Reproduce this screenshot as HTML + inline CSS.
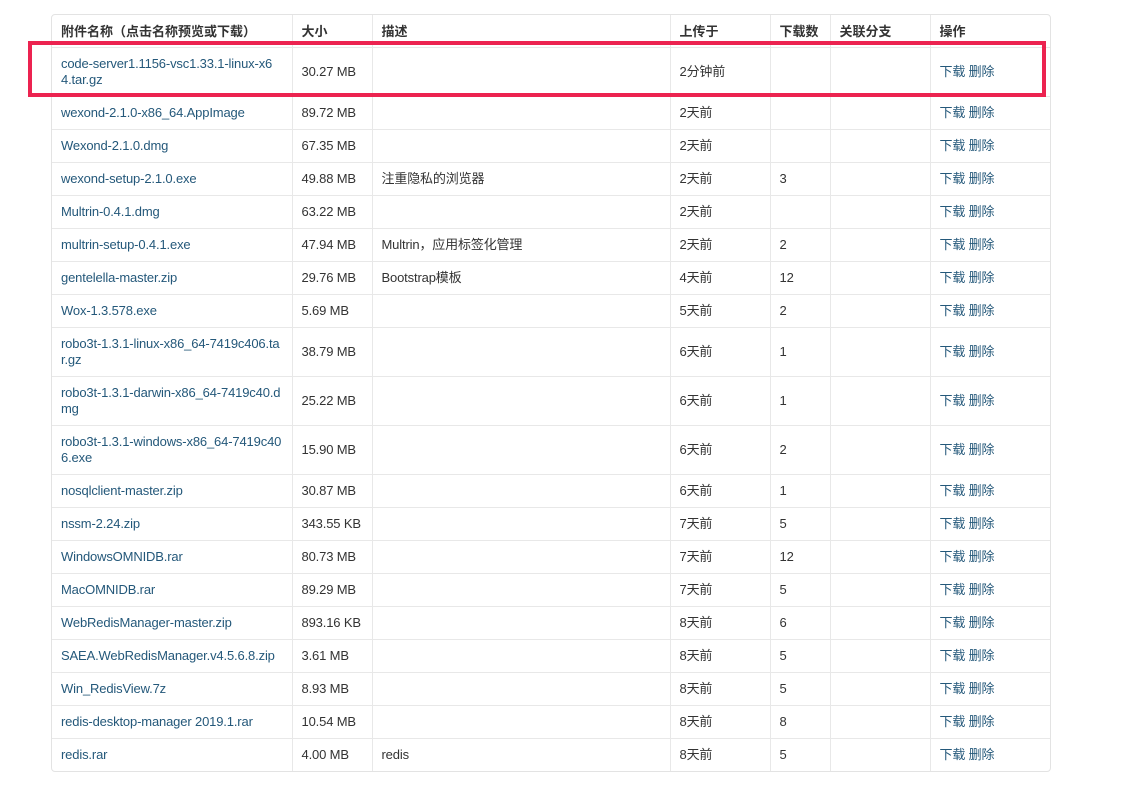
<!DOCTYPE html>
<html><head><meta charset="utf-8"><style>
body{margin:0;background:#fff;font-family:"Liberation Sans","Noto Sans CJK SC",sans-serif;font-size:13px;color:#333;}
.wrap{position:absolute;left:51px;top:14px;width:998px;border:1px solid #e3e3e3;border-radius:4px;}
table{border-collapse:collapse;width:100%;table-layout:fixed;}
td,th{border-left:1px solid #e8e8e8;border-top:1px solid #e8e8e8;padding:0 9px;text-align:left;vertical-align:middle;line-height:16px;white-space:nowrap;letter-spacing:-0.15px;}
td:first-child,th:first-child{border-left:none;}
th{font-weight:bold;height:31px;border-top:none;padding-top:1px;letter-spacing:0;}
tr.s td{height:32px;}
tr.d td{height:48px;}
a{color:#24587a;text-decoration:none;}
.box{position:absolute;left:28px;top:41px;width:1010px;height:48px;border:4px solid #ec2350;}
</style></head><body>
<div class="wrap"><table>
<colgroup><col style="width:240px"><col style="width:80px"><col style="width:298px"><col style="width:100px"><col style="width:60px"><col style="width:100px"><col></colgroup>
<tr><th>附件名称（点击名称预览或下载）</th><th>大小</th><th>描述</th><th>上传于</th><th>下载数</th><th>关联分支</th><th>操作</th></tr>
<tr class="d"><td><a>code-server1.1156-vsc1.33.1-linux-x6<br>4.tar.gz</a></td><td>30.27 MB</td><td></td><td>2分钟前</td><td></td><td></td><td><a>下载</a> <a>删除</a></td></tr>
<tr class="s"><td><a>wexond-2.1.0-x86_64.AppImage</a></td><td>89.72 MB</td><td></td><td>2天前</td><td></td><td></td><td><a>下载</a> <a>删除</a></td></tr>
<tr class="s"><td><a>Wexond-2.1.0.dmg</a></td><td>67.35 MB</td><td></td><td>2天前</td><td></td><td></td><td><a>下载</a> <a>删除</a></td></tr>
<tr class="s"><td><a>wexond-setup-2.1.0.exe</a></td><td>49.88 MB</td><td>注重隐私的浏览器</td><td>2天前</td><td>3</td><td></td><td><a>下载</a> <a>删除</a></td></tr>
<tr class="s"><td><a>Multrin-0.4.1.dmg</a></td><td>63.22 MB</td><td></td><td>2天前</td><td></td><td></td><td><a>下载</a> <a>删除</a></td></tr>
<tr class="s"><td><a>multrin-setup-0.4.1.exe</a></td><td>47.94 MB</td><td>Multrin，应用标签化管理</td><td>2天前</td><td>2</td><td></td><td><a>下载</a> <a>删除</a></td></tr>
<tr class="s"><td><a>gentelella-master.zip</a></td><td>29.76 MB</td><td>Bootstrap模板</td><td>4天前</td><td>12</td><td></td><td><a>下载</a> <a>删除</a></td></tr>
<tr class="s"><td><a>Wox-1.3.578.exe</a></td><td>5.69 MB</td><td></td><td>5天前</td><td>2</td><td></td><td><a>下载</a> <a>删除</a></td></tr>
<tr class="d"><td><a>robo3t-1.3.1-linux-x86_64-7419c406.ta<br>r.gz</a></td><td>38.79 MB</td><td></td><td>6天前</td><td>1</td><td></td><td><a>下载</a> <a>删除</a></td></tr>
<tr class="d"><td><a>robo3t-1.3.1-darwin-x86_64-7419c40.d<br>mg</a></td><td>25.22 MB</td><td></td><td>6天前</td><td>1</td><td></td><td><a>下载</a> <a>删除</a></td></tr>
<tr class="d"><td><a>robo3t-1.3.1-windows-x86_64-7419c40<br>6.exe</a></td><td>15.90 MB</td><td></td><td>6天前</td><td>2</td><td></td><td><a>下载</a> <a>删除</a></td></tr>
<tr class="s"><td><a>nosqlclient-master.zip</a></td><td>30.87 MB</td><td></td><td>6天前</td><td>1</td><td></td><td><a>下载</a> <a>删除</a></td></tr>
<tr class="s"><td><a>nssm-2.24.zip</a></td><td>343.55 KB</td><td></td><td>7天前</td><td>5</td><td></td><td><a>下载</a> <a>删除</a></td></tr>
<tr class="s"><td><a>WindowsOMNIDB.rar</a></td><td>80.73 MB</td><td></td><td>7天前</td><td>12</td><td></td><td><a>下载</a> <a>删除</a></td></tr>
<tr class="s"><td><a>MacOMNIDB.rar</a></td><td>89.29 MB</td><td></td><td>7天前</td><td>5</td><td></td><td><a>下载</a> <a>删除</a></td></tr>
<tr class="s"><td><a>WebRedisManager-master.zip</a></td><td>893.16 KB</td><td></td><td>8天前</td><td>6</td><td></td><td><a>下载</a> <a>删除</a></td></tr>
<tr class="s"><td><a>SAEA.WebRedisManager.v4.5.6.8.zip</a></td><td>3.61 MB</td><td></td><td>8天前</td><td>5</td><td></td><td><a>下载</a> <a>删除</a></td></tr>
<tr class="s"><td><a>Win_RedisView.7z</a></td><td>8.93 MB</td><td></td><td>8天前</td><td>5</td><td></td><td><a>下载</a> <a>删除</a></td></tr>
<tr class="s"><td><a>redis-desktop-manager 2019.1.rar</a></td><td>10.54 MB</td><td></td><td>8天前</td><td>8</td><td></td><td><a>下载</a> <a>删除</a></td></tr>
<tr class="s"><td><a>redis.rar</a></td><td>4.00 MB</td><td>redis</td><td>8天前</td><td>5</td><td></td><td><a>下载</a> <a>删除</a></td></tr>
</table></div>
<div class="box"></div>
</body></html>
